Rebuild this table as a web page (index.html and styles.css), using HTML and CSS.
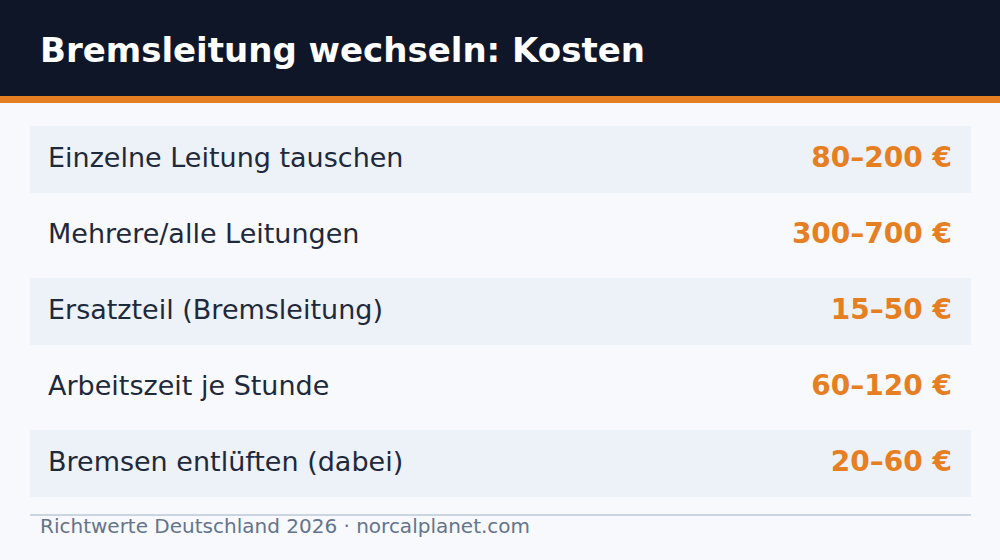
FILE: index.html
```html
<!DOCTYPE html>
<html lang="de">
<head>
<meta charset="utf-8">
<title>Bremsleitung wechseln: Kosten</title>
<link rel="stylesheet" href="styles.css">
</head>
<body>
<header class="header">
  <h1 class="title">Bremsleitung wechseln: Kosten</h1>
</header>
<main class="content">
  <ul class="rows">
    <li class="row row-shaded"><span class="label">Einzelne Leitung tauschen</span><span class="value">80–200 €</span></li>
    <li class="row"><span class="label">Mehrere/alle Leitungen</span><span class="value">300–700 €</span></li>
    <li class="row row-shaded"><span class="label">Ersatzteil (Bremsleitung)</span><span class="value">15–50 €</span></li>
    <li class="row"><span class="label">Arbeitszeit je Stunde</span><span class="value">60–120 €</span></li>
    <li class="row row-shaded"><span class="label">Bremsen entlüften (dabei)</span><span class="value">20–60 €</span></li>
  </ul>
  <footer class="footer">Richtwerte Deutschland 2026 · norcalplanet.com</footer>
</main>
</body>
</html>
```
FILE: styles.css
```css
html, body {
  margin: 0;
  padding: 0;
}
body {
  width: 1000px;
  height: 560px;
  overflow: hidden;
  background: #f7f9fc;
  font-family: "DejaVu Sans", "Liberation Sans", sans-serif;
}
.header {
  height: 92px;
  padding: 4px 0 0 40px;
  background: #0f1628;
  border-bottom: 7px solid #e67e22;
  display: flex;
  align-items: center;
}
.title {
  margin: 0;
  color: #ffffff;
  font-size: 34px;
  font-weight: bold;
  line-height: 1;
}
.content {
  padding: 23px 29px 0 30px;
}
.rows {
  list-style: none;
  margin: 0;
  padding: 0;
  display: flex;
  flex-direction: column;
  gap: 9px;
}
.row {
  height: 63px;
  display: flex;
  align-items: center;
  justify-content: space-between;
  padding: 0 19px 4px 18px;
}
.row-shaded {
  background: #edf1f8;
}
.label {
  color: #1e293b;
  font-size: 27px;
}
.value {
  color: #e67e22;
  font-size: 28px;
  font-weight: bold;
}
.footer {
  margin-top: 17px;
  border-top: 2px solid #cbd5e1;
  padding-left: 10px;
  color: #64748b;
  font-size: 20px;
  line-height: 20px;
}
```
